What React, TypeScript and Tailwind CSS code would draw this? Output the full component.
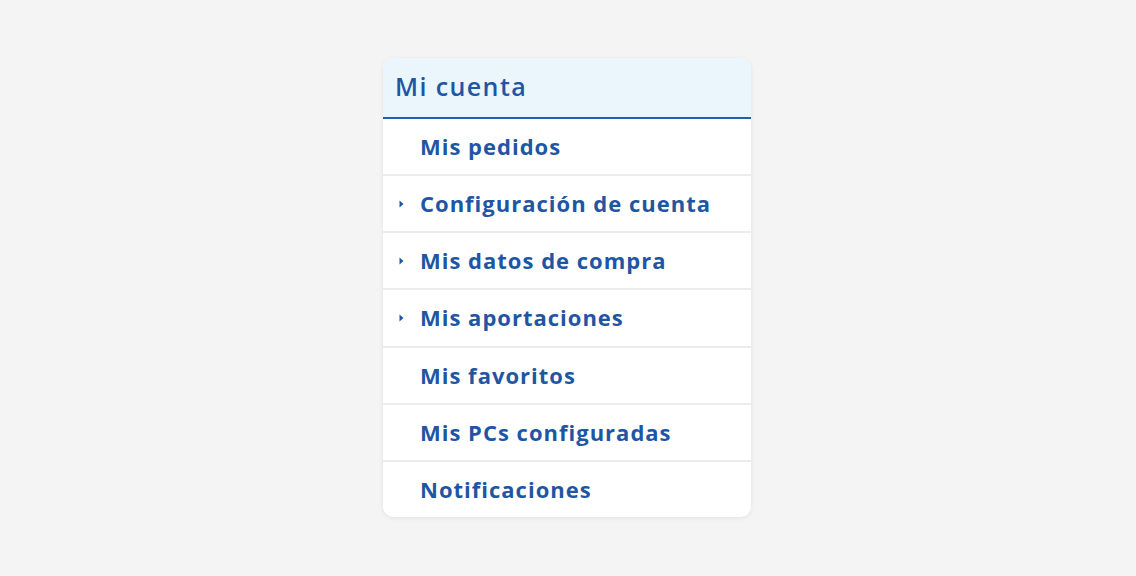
import React from "react";

type Item = { label: string; expandable?: boolean };

const items: Item[] = [
  { label: "Mis pedidos" },
  { label: "Configuración de cuenta", expandable: true },
  { label: "Mis datos de compra", expandable: true },
  { label: "Mis aportaciones", expandable: true },
  { label: "Mis favoritos" },
  { label: "Mis PCs configuradas" },
  { label: "Notificaciones" },
];

const App: React.FC = () => {
  return (
    <div
      className="w-[1136px] h-[576px] bg-[#f4f4f4] flex justify-center pt-[58px]"
      style={{ fontFamily: '"Open Sans", "Liberation Sans", sans-serif' }}
    >
      <div className="w-[368px] mr-[2px] h-[459px] bg-white rounded-[10px] shadow-[0_1px_4px_rgba(0,0,0,0.08)] overflow-hidden flex flex-col">
        {/* Header */}
        <div className="h-[61px] bg-[#eaf5fc] border-b-2 border-[#2160ad] flex items-center pl-[12px]">
          <h2 className="text-[25px] font-semibold text-[#1f56a3] tracking-[1.4px] -mt-[2px]">
            Mi cuenta
          </h2>
        </div>

        {items.map((item, i) => (
          <div
            key={item.label}
            className={`flex-1 flex items-center ${
              i > 0 ? "border-t-2 border-[#ececec]" : ""
            }`}
          >
            <span className="w-[37px] flex justify-end pr-[16px]">
              {item.expandable && (
                <svg width="5" height="8" viewBox="0 0 5 8">
                  <path d="M0.5 0.5 L4.5 4 L0.5 7.5 Z" fill="#1f56a3" />
                </svg>
              )}
            </span>
            <span className="text-[22px] font-bold text-[#1f56a3] tracking-[1px]">
              {item.label}
            </span>
          </div>
        ))}
      </div>
    </div>
  );
};

export default App;
